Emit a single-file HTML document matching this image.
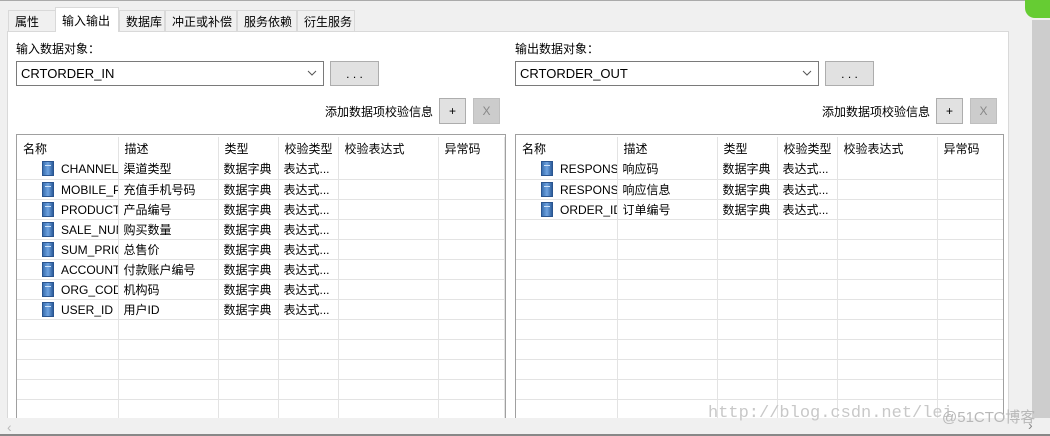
<!DOCTYPE html>
<html><head><meta charset="utf-8"><style>
*{box-sizing:border-box;margin:0;padding:0}
body{width:1050px;height:436px;overflow:hidden;background:#f0f0f0;font-family:"Liberation Sans","Noto Sans CJK SC",sans-serif;font-size:12px;color:#000;position:relative}
.abs{position:absolute}
.tab{position:absolute;top:10px;height:21px;border:1px solid #d9d9d9;border-bottom:none;background:#f0f0f0;padding:2px 0 0 6px;font-size:12px}
.panel{position:absolute;left:7px;top:31px;width:1002px;height:400px;background:#fff;border:1px solid #d9d9d9}
.combo{position:absolute;height:25px;border:1px solid #7a7a7a;background:#fff;padding:4px 0 0 4px;font-size:13px}
.combo svg{position:absolute;right:6px;top:8px}
.btn{position:absolute;background:#e1e1e1;border:1px solid #adadad;text-align:center}
.grid{position:absolute;border:1px solid #a0a0a0;background:#fff;overflow:hidden}
table{border-collapse:collapse;table-layout:fixed;position:absolute;left:0;top:2px;width:486px}
td{height:20px;border-right:1px solid #e3e3e3;border-bottom:1px solid #e3e3e3;white-space:nowrap;overflow:hidden;padding-left:5px;font-size:12px;text-overflow:clip}
tr.h td{border-bottom:none;height:22px;padding-left:6px}
.ic{display:inline-block;width:12px;height:15px;background:linear-gradient(90deg,#3a6fb0,#6fa3e0 50%,#2c5d9c);border:1px solid #2a5590;vertical-align:-3px;margin:0 7px 0 25px;position:relative}
.ic:after{content:"";position:absolute;left:2px;top:3px;width:6px;height:1px;background:#cfe2f7}
</style></head><body>
<div class="abs" style="left:0;top:0;width:1050px;height:1px;background:#aaa"></div>
<div class="tab" style="left:8px;width:48px">属性</div>
<div class="tab" style="left:119px;width:46px;">数据库</div>
<div class="tab" style="left:165px;width:72px">冲正或补偿</div>
<div class="tab" style="left:237px;width:60px">服务依赖</div>
<div class="tab" style="left:297px;width:58px">衍生服务</div>
<div class="panel"></div>
<div class="tab" style="left:55px;top:7px;width:64px;height:25px;background:#fff;border-color:#d9d9d9;z-index:2;padding-top:4px">输入输出</div>

<div class="abs" style="left:16px;top:40px;font-size:12px">输入数据对象：</div>
<div class="combo" style="left:16px;top:61px;width:308px">CRTORDER_IN<svg width="10" height="7"><path d="M1 1 L5 5 L9 1" stroke="#555" fill="none"/></svg></div>
<div class="btn" style="left:330px;top:61px;width:49px;height:25px;padding-top:5px">. . .</div>
<div class="abs" style="left:325px;top:103px">添加数据项校验信息</div>
<div class="btn" style="left:439px;top:98px;width:27px;height:26px;padding-top:5px">+</div>
<div class="btn" style="left:473px;top:98px;width:27px;height:26px;padding-top:5px;background:#cccccc;border-color:#bfbfbf;color:#888">X</div>

<div class="abs" style="left:515px;top:40px">输出数据对象：</div>
<div class="combo" style="left:515px;top:61px;width:304px">CRTORDER_OUT<svg width="10" height="7"><path d="M1 1 L5 5 L9 1" stroke="#555" fill="none"/></svg></div>
<div class="btn" style="left:825px;top:61px;width:49px;height:25px;padding-top:5px">. . .</div>
<div class="abs" style="left:822px;top:103px">添加数据项校验信息</div>
<div class="btn" style="left:936px;top:98px;width:27px;height:26px;padding-top:5px">+</div>
<div class="btn" style="left:970px;top:98px;width:27px;height:26px;padding-top:5px;background:#cccccc;border-color:#bfbfbf;color:#888">X</div>

<div class="grid" style="left:16px;top:134px;width:490px;height:300px">
<table><colgroup><col style="width:101px"><col style="width:100px"><col style="width:60px"><col style="width:60px"><col style="width:100px"><col style="width:66px"></colgroup>
<tr class="h"><td>名称</td><td>描述</td><td>类型</td><td>校验类型</td><td>校验表达式</td><td>异常码</td></tr>
<tr><td style="padding:0"><span class="ic"></span>CHANNEL</td><td>渠道类型</td><td>数据字典</td><td>表达式...</td><td></td><td></td></tr>
<tr><td style="padding:0"><span class="ic"></span>MOBILE_PHONE</td><td>充值手机号码</td><td>数据字典</td><td>表达式...</td><td></td><td></td></tr>
<tr><td style="padding:0"><span class="ic"></span>PRODUCT</td><td>产品编号</td><td>数据字典</td><td>表达式...</td><td></td><td></td></tr>
<tr><td style="padding:0"><span class="ic"></span>SALE_NUM</td><td>购买数量</td><td>数据字典</td><td>表达式...</td><td></td><td></td></tr>
<tr><td style="padding:0"><span class="ic"></span>SUM_PRICE</td><td>总售价</td><td>数据字典</td><td>表达式...</td><td></td><td></td></tr>
<tr><td style="padding:0"><span class="ic"></span>ACCOUNT</td><td>付款账户编号</td><td>数据字典</td><td>表达式...</td><td></td><td></td></tr>
<tr><td style="padding:0"><span class="ic"></span>ORG_CODE</td><td>机构码</td><td>数据字典</td><td>表达式...</td><td></td><td></td></tr>
<tr><td style="padding:0"><span class="ic"></span>USER_ID</td><td>用户ID</td><td>数据字典</td><td>表达式...</td><td></td><td></td></tr>
<tr><td></td><td></td><td></td><td></td><td></td><td></td></tr>
<tr><td></td><td></td><td></td><td></td><td></td><td></td></tr>
<tr><td></td><td></td><td></td><td></td><td></td><td></td></tr>
<tr><td></td><td></td><td></td><td></td><td></td><td></td></tr>
<tr><td></td><td></td><td></td><td></td><td></td><td></td></tr>
</table></div>

<div class="grid" style="left:515px;top:134px;width:489px;height:300px">
<table><colgroup><col style="width:101px"><col style="width:100px"><col style="width:60px"><col style="width:60px"><col style="width:100px"><col style="width:66px"></colgroup>
<tr class="h"><td>名称</td><td>描述</td><td>类型</td><td>校验类型</td><td>校验表达式</td><td>异常码</td></tr>
<tr><td style="padding:0"><span class="ic"></span>RESPONSE</td><td>响应码</td><td>数据字典</td><td>表达式...</td><td></td><td></td></tr>
<tr><td style="padding:0"><span class="ic"></span>RESPONSE</td><td>响应信息</td><td>数据字典</td><td>表达式...</td><td></td><td></td></tr>
<tr><td style="padding:0"><span class="ic"></span>ORDER_ID</td><td>订单编号</td><td>数据字典</td><td>表达式...</td><td></td><td></td></tr>
<tr><td></td><td></td><td></td><td></td><td></td><td></td></tr>
<tr><td></td><td></td><td></td><td></td><td></td><td></td></tr>
<tr><td></td><td></td><td></td><td></td><td></td><td></td></tr>
<tr><td></td><td></td><td></td><td></td><td></td><td></td></tr>
<tr><td></td><td></td><td></td><td></td><td></td><td></td></tr>
<tr><td></td><td></td><td></td><td></td><td></td><td></td></tr>
<tr><td></td><td></td><td></td><td></td><td></td><td></td></tr>
<tr><td></td><td></td><td></td><td></td><td></td><td></td></tr>
<tr><td></td><td></td><td></td><td></td><td></td><td></td></tr>
<tr><td></td><td></td><td></td><td></td><td></td><td></td></tr>
</table></div>

<div class="abs" style="left:1009px;top:20px;width:23px;height:400px;background:#f0f0f0"></div>
<div class="abs" style="left:1032px;top:20px;width:18px;height:400px;background:#cdcdcd"></div>
<div class="abs" style="left:0;top:418px;width:1050px;height:18px;background:#f0f0f0;border-bottom:2px solid #888"></div>
<div class="abs" style="left:7px;top:419px;color:#bbb;font-size:14px">‹</div>
<div class="abs" style="left:1028px;top:417px;color:#888;font-size:14px">›</div>
<div class="abs" style="left:1025px;top:0;width:25px;height:18px;background:#6c3;border-radius:0 0 0 10px"></div>
<div class="abs" style="left:708px;top:404px;font-family:'Liberation Mono',monospace;font-size:17px;color:#c8c8c8">http://blog.csdn.net/lei</div>
<div class="abs" style="left:942px;top:406px;font-size:15px;color:#b8b8b8">@51CTO博客</div>
</body></html>
